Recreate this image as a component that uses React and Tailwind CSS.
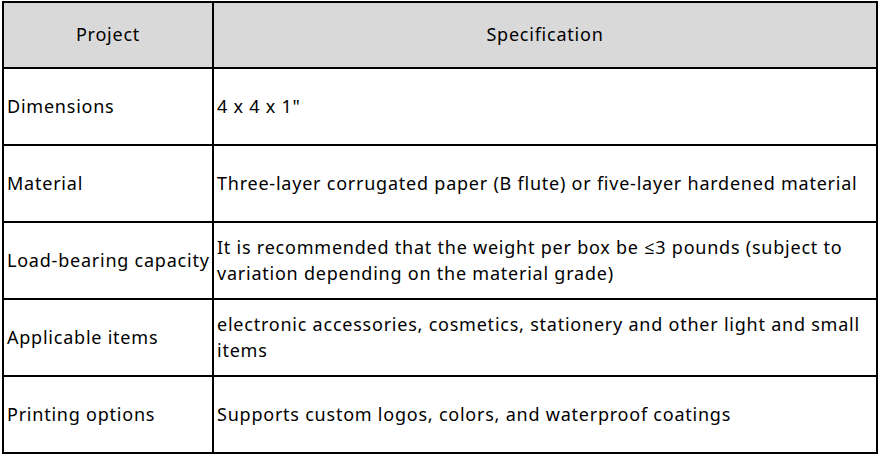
export default function App() {
  const rows = [
    ["Dimensions", '4 x 4 x 1"'],
    ["Material", "Three-layer corrugated paper (B flute) or five-layer hardened material"],
    [
      "Load-bearing capacity",
      "It is recommended that the weight per box be ≤3 pounds (subject to variation depending on the material grade)",
    ],
    ["Applicable items", "electronic accessories, cosmetics, stationery and other light and small items"],
    ["Printing options", "Supports custom logos, colors, and waterproof coatings"],
  ]

  return (
    <div
      className="w-[880px] h-[456px] bg-white pl-[2px] pt-[1px] text-black"
      style={{ fontFamily: '"Noto Sans", "Open Sans", sans-serif' }}
    >
      <table className="border-collapse table-fixed w-[876px] text-[18px] leading-[26px] tracking-[0.77px]">
        <colgroup>
          <col className="w-[210px]" />
          <col />
        </colgroup>
        <thead>
          <tr className="h-[66px] bg-[#d9d9d9]">
            <th className="border-2 border-black font-normal text-center pb-[2px]">Project</th>
            <th className="border-2 border-black font-normal text-center pb-[2px]">Specification</th>
          </tr>
        </thead>
        <tbody>
          {rows.map(([k, v]) => (
            <tr key={k} className="h-[77px]">
              <td className="border-2 border-black px-[3px] pb-[2px] whitespace-nowrap">{k}</td>
              <td className="border-2 border-black pl-[3px] pr-[8px] pb-[2px]">{v}</td>
            </tr>
          ))}
        </tbody>
      </table>
    </div>
  )
}
